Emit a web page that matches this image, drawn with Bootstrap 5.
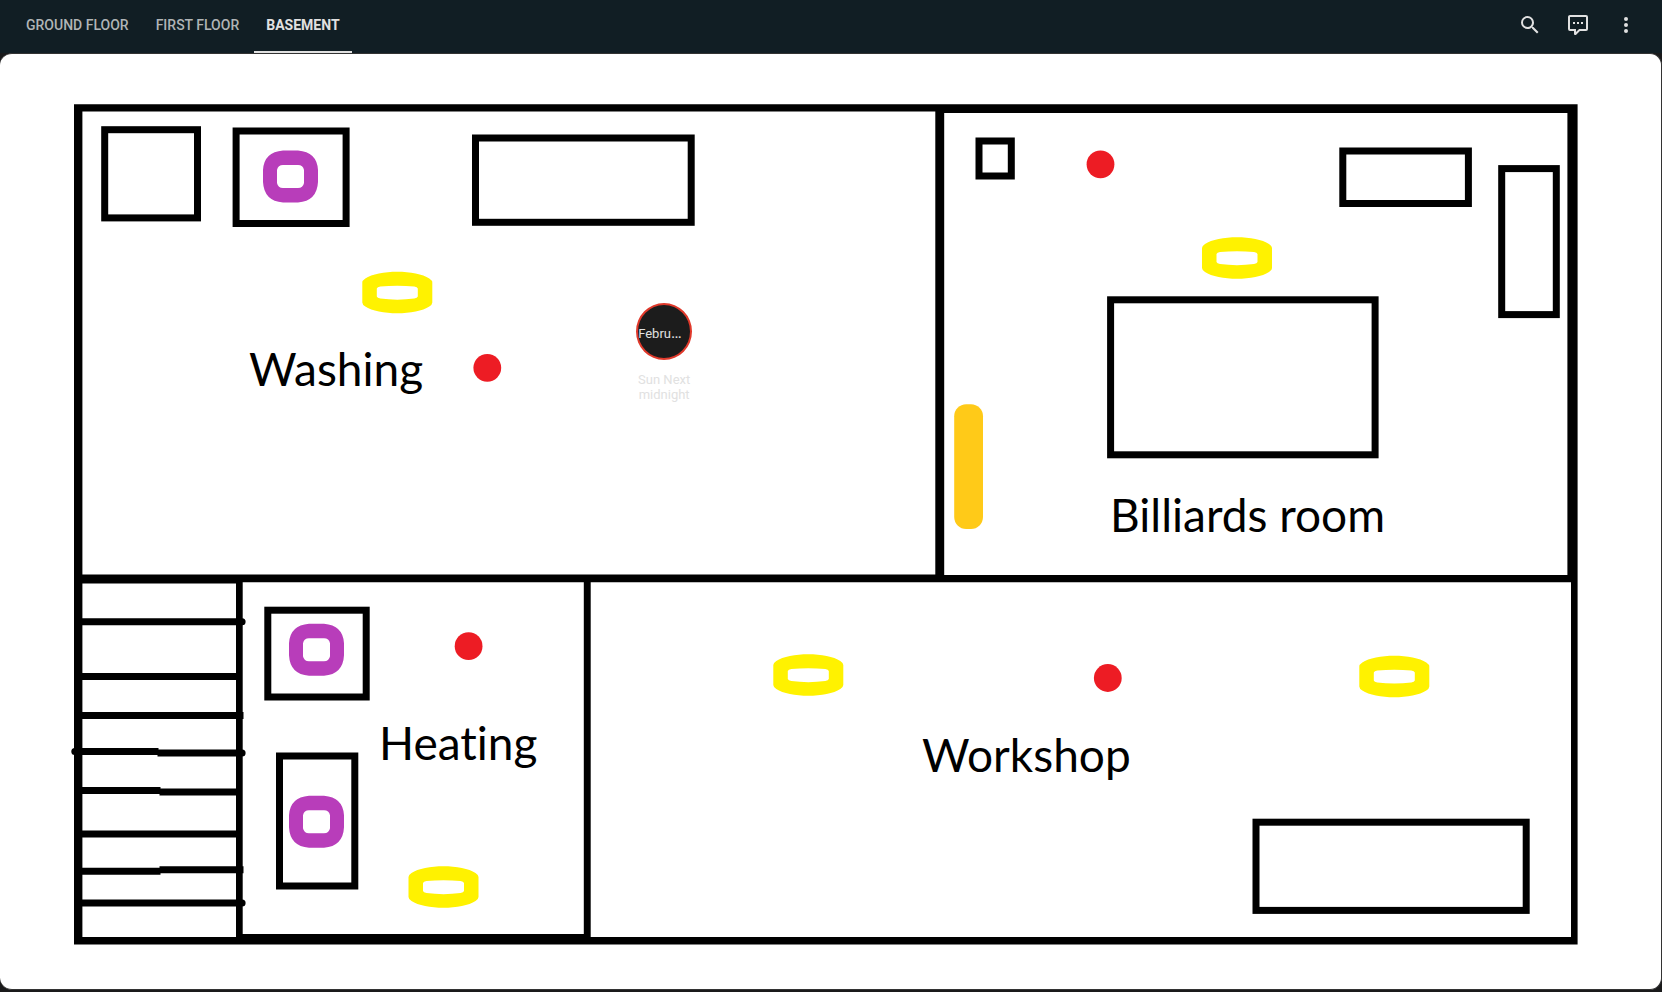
<!DOCTYPE html>
<html lang="en">
<head>
<meta charset="utf-8">
<meta name="viewport" content="width=device-width, initial-scale=1">
<title>Basement</title>
<link href="https://cdn.jsdelivr.net/npm/bootstrap@5.3.0/dist/css/bootstrap.min.css" rel="stylesheet">
<style>
  body { background: #1a1a1b; font-family: Roboto, "Liberation Sans", sans-serif; }
  .topbar { background: #111e24; height: 53px; padding: 0 24px 0 14px; }
  .floors .nav-link { color: #b0b4b6; font-size: 14px; font-weight: 500; line-height: 20px; padding: 15px 12px 16px; border-bottom: 2px solid transparent; }
  .floors .nav-item + .nav-item { margin-left: 3px; }
  .floors .nav-link.active { color: #e1e1e1; font-weight: 700; border-color: #e1e1e1; }
  .tools { padding-top: 13px; }
  .tool { color: #e1e1e1; line-height: 0; }
  .plan-card { border: 1px solid #333; border-left: 0; border-radius: 12px; background: #fff; overflow: hidden; }
  .plan { display: block; width: 100%; height: auto; }
  .room { font-family: Lato, "Noto Sans", sans-serif; font-size: 46px; font-variant-ligatures: none; }
  .state { left: 38.3%; top: 26.6%; width: 56px; font-size: 13px; line-height: 15px; color: #e1e1e1; }
  .state-disc { height: 57px; border: 2px solid #e0392b; background: #1c1c1c; line-height: 57px; }
  .state-more { font-size: 16px; line-height: 1; }
  .state-name { margin-top: 12px; }
</style>
</head>
<body>
<header class="topbar d-flex align-items-start justify-content-between">
  <nav aria-label="Floors">
    <ul class="nav floors">
      <li class="nav-item"><a class="nav-link" href="#ground">GROUND FLOOR</a></li>
      <li class="nav-item"><a class="nav-link" href="#first">FIRST FLOOR</a></li>
      <li class="nav-item"><a class="nav-link active" aria-current="page" href="#basement">BASEMENT</a></li>
    </ul>
  </nav>
  <div class="tools d-flex align-items-center gap-4">
    <button class="tool btn p-0 border-0" type="button" aria-label="Search"><svg width="24" height="24" viewBox="0 0 24 24" fill="currentColor"><path d="M9.5,3A6.5,6.5 0 0,1 16,9.5C16,11.11 15.41,12.59 14.44,13.73L14.71,14H15.5L20.5,19L19,20.5L14,15.5V14.71L13.73,14.44C12.59,15.41 11.11,16 9.5,16A6.5,6.5 0 0,1 3,9.5A6.5,6.5 0 0,1 9.5,3M9.5,5C7,5 5,7 5,9.5C5,12 7,14 9.5,14C12,14 14,12 14,9.5C14,7 12,5 9.5,5Z"/></svg></button>
    <button class="tool btn p-0 border-0" type="button" aria-label="Assist"><svg width="24" height="24" viewBox="0 0 24 24" fill="currentColor"><path d="M9,22A1,1 0 0,1 8,21V18H4A2,2 0 0,1 2,16V4C2,2.89 2.9,2 4,2H20A2,2 0 0,1 22,4V16A2,2 0 0,1 20,18H13.9L10.2,21.71C10,21.9 9.75,22 9.5,22H9M10,16V19.08L13.08,16H20V4H4V16H10M17,11H15V9H17V11M13,11H11V9H13V11M9,11H7V9H9V11Z"/></svg></button>
    <button class="tool btn p-0 border-0" type="button" aria-label="Menu"><svg width="24" height="24" viewBox="0 0 24 24" fill="currentColor"><path d="M12,16A2,2 0 0,1 14,18A2,2 0 0,1 12,20A2,2 0 0,1 10,18A2,2 0 0,1 12,16M12,10A2,2 0 0,1 14,12A2,2 0 0,1 12,14A2,2 0 0,1 10,12A2,2 0 0,1 12,10M12,4A2,2 0 0,1 14,6A2,2 0 0,1 12,8A2,2 0 0,1 10,6A2,2 0 0,1 12,4Z"/></svg></button>
  </div>
</header>
<main class="plan-card position-relative">
  <svg class="plan" viewBox="0 54 1661 935" role="img" aria-label="Basement floor plan">
    <defs>
      <path id="lamp" fill="#fff200" fill-rule="evenodd" d="M0,11Q0,9 3,7C16,-2 54,-2 67,7Q70,9 70,11V31Q70,33 67,35C54,44 16,44 3,35Q0,33 0,31ZM14.5,17V25Q15,26.5 18,27C29,28.5 41,28.5 52,27Q55,26.5 55.5,25V17Q55,15.5 52,15C41,14 29,14 18,15Q15,15.5 14.5,17Z"/>
      <path id="plug" fill="#b83dba" fill-rule="evenodd" d="M20,.5H35Q54,2 55,20V32Q54,51 35,52.5H20Q1,51 0,32V20Q1,2 20,.5ZM20,15Q15,15 14,20V33Q15,38 20,38H35Q40,38 41,33V20Q40,15 35,15Z"/>
    </defs>
    <!-- walls -->
    <path d="M74,104.3H1577.6V944.5H74ZM82.4,111.6V574.6H935.3V111.6ZM944.2,113V575H1567.4V113ZM82.4,583.4V937H236V583.4ZM242.7,582.2V934H583.8V582.2ZM590.7,582.2V937H1571V582.2Z" fill-rule="evenodd"/>
    <!-- stairs -->
    <g stroke="#000" stroke-width="7">
      <path d="M80,621.7H242M80,676.5H240M80,715.5H243.5M76,751.5H158.5M157.5,753H242M80,790.5H160.5M159.5,792H240M80,834H240M80,871.3H160.5M159.5,869.8H243.5M80,903H242"/>
      <path d="M74.8,751.5h.1M242,621.7h.1M242,753h.1M242,903h.1" stroke-linecap="round"/>
    </g>
    <!-- furniture -->
    <g fill="none" stroke="#000" stroke-width="7">
      <rect x="104.7" y="129.7" width="92.8" height="88.2"/>
      <rect x="236.1" y="131" width="110" height="92.5"/>
      <rect x="475.5" y="138" width="215.7" height="84.3"/>
      <rect x="979" y="141" width="32.3" height="35"/>
      <rect x="1342.8" y="151" width="125.6" height="52.5"/>
      <rect x="1501.7" y="168.6" width="54.6" height="146"/>
      <rect x="1110.6" y="299.8" width="264.5" height="155"/>
      <rect x="267.8" y="610.2" width="98.4" height="86.8"/>
      <rect x="279.5" y="756" width="75.3" height="130"/>
      <rect x="1256" y="822.2" width="270.2" height="88.2"/>
    </g>
    <!-- devices -->
    <use href="#plug" x="263" y="150"/><use href="#plug" x="289" y="623.3"/><use href="#plug" x="289" y="795.2"/>
    <use href="#lamp" x="362.3" y="271.6"/><use href="#lamp" x="1202" y="237"/><use href="#lamp" x="408.5" y="866"/><use href="#lamp" x="773.3" y="654"/><use href="#lamp" x="1359.3" y="655.4"/>
    <g fill="#ed1c24"><circle cx="487.3" cy="367.8" r="13.9"/><circle cx="1100.5" cy="164.3" r="13.9"/><circle cx="468.6" cy="646.2" r="13.9"/><circle cx="1107.8" cy="678" r="13.9"/></g>
    <rect x="954.2" y="404.3" width="28.8" height="124.6" rx="12" fill="#ffca18"/>
    <g class="room">
      <text x="249" y="386">Washing</text>
      <text x="1110" y="532">Billiards room</text>
      <text x="379" y="760">Heating</text>
      <text x="922" y="772">Workshop</text>
    </g>
  </svg>
  <div class="state position-absolute text-center">
    <div class="state-disc rounded-circle text-start text-nowrap">Febru<span class="state-more">…</span></div>
    <div class="state-name">Sun Next midnight</div>
  </div>
</main>
<script src="https://cdn.jsdelivr.net/npm/bootstrap@5.3.0/dist/js/bootstrap.bundle.min.js"></script>
</body>
</html>
